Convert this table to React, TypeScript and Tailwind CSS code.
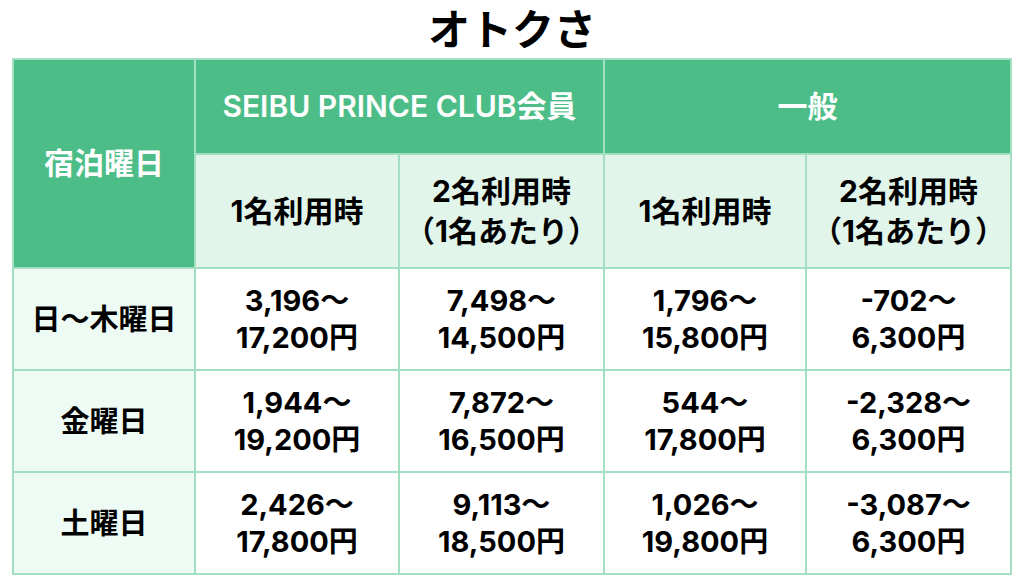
import React from 'react';

const rows = [
  { day: '日〜木曜日', cells: [['3,196〜', '17,200円'], ['7,498〜', '14,500円'], ['1,796〜', '15,800円'], ['-702〜', '6,300円']] },
  { day: '金曜日', cells: [['1,944〜', '19,200円'], ['7,872〜', '16,500円'], ['544〜', '17,800円'], ['-2,328〜', '6,300円']] },
  { day: '土曜日', cells: [['2,426〜', '17,800円'], ['9,113〜', '18,500円'], ['1,026〜', '19,800円'], ['-3,087〜', '6,300円']] },
];

const border = 'border-2 border-[#a3e0c3]';

export default function App() {
  return (
    <div
      className="w-[1024px] h-[576px] bg-white flex flex-col items-center text-black"
      style={{ fontFamily: '"Inter", "Noto Sans CJK JP", sans-serif' }}
    >
      <h1 className="h-[58px] flex items-center justify-center text-[42px] font-bold leading-none pt-[2px]">オトクさ</h1>
      <table className="w-[998px] border-collapse table-fixed text-center font-bold text-[29px] leading-[37px]">
        <colgroup>
          <col className="w-[182px]" />
          <col className="w-[204px]" />
          <col className="w-[205px]" />
          <col className="w-[202px]" />
          <col className="w-[205px]" />
        </colgroup>
        <thead className="text-[30px]">
          <tr className="h-[95px]">
            <th rowSpan={2} className={`${border} bg-[#4dbd88] text-white font-semibold`}>宿泊曜日</th>
            <th colSpan={2} className={`${border} bg-[#4dbd88] text-white font-semibold`}>SEIBU PRINCE CLUB会員</th>
            <th colSpan={2} className={`${border} bg-[#4dbd88] text-white font-semibold`}>一般</th>
          </tr>
          <tr className="h-[114px]">
            <th className={`${border} bg-[#e1f5eb] font-bold`}>1名利用時</th>
            <th className={`${border} bg-[#e1f5eb] font-bold leading-[40px]`}>2名利用時<br />（1名あたり）</th>
            <th className={`${border} bg-[#e1f5eb] font-bold`}>1名利用時</th>
            <th className={`${border} bg-[#e1f5eb] font-bold leading-[40px]`}>2名利用時<br />（1名あたり）</th>
          </tr>
        </thead>
        <tbody>
          {rows.map((r) => (
            <tr key={r.day} className="h-[102px]">
              <td className={`${border} bg-[#eefbf5]`}>{r.day}</td>
              {r.cells.map((c, i) => (
                <td key={i} className={`${border} bg-white`}>
                  {c[0]}
                  <br />
                  {c[1]}
                </td>
              ))}
            </tr>
          ))}
        </tbody>
      </table>
    </div>
  );
}
